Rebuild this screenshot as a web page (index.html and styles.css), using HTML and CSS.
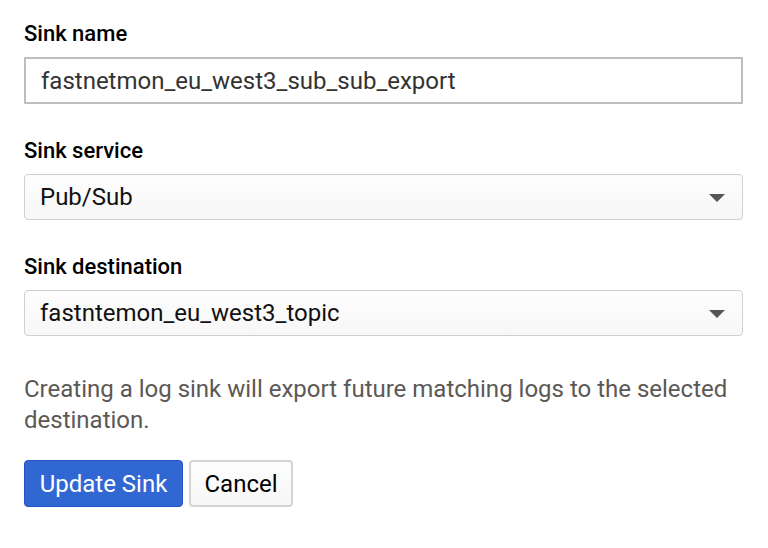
FILE: index.html
```html
<!DOCTYPE html>
<html>
<head>
<meta charset="utf-8">
<link rel="stylesheet" href="styles.css">
</head>
<body>
<form class="sink-form">
  <div class="field">
    <label class="field-label">Sink name</label>
    <div class="text-input">fastnetmon_eu_west3_sub_sub_export</div>
  </div>
  <div class="field">
    <label class="field-label">Sink service</label>
    <div class="select">
      <span class="select-value">Pub/Sub</span>
      <svg class="caret" width="16" height="8" viewBox="0 0 16 8"><path d="M0 0H16L8 8Z" fill="#555"/></svg>
    </div>
  </div>
  <div class="field">
    <label class="field-label">Sink destination</label>
    <div class="select">
      <span class="select-value">fastntemon_eu_west3_topic</span>
      <svg class="caret" width="16" height="8" viewBox="0 0 16 8"><path d="M0 0H16L8 8Z" fill="#555"/></svg>
    </div>
  </div>
  <p class="description">Creating a log sink will export future matching logs to the selected destination.</p>
  <div class="actions">
    <button type="button" class="btn btn-primary">Update Sink</button>
    <button type="button" class="btn btn-secondary">Cancel</button>
  </div>
</form>
</body>
</html>
```

FILE: styles.css
```css
html, body {
  margin: 0;
  padding: 0;
  background: #ffffff;
}

body {
  font-family: Roboto, "Liberation Sans", Arial, sans-serif;
}

.sink-form {
  width: 719px;
  padding: 22px 0 0 24px;
}

.field {
  margin-bottom: 35px;
}

.field-label {
  display: block;
  font-size: 22px;
  line-height: 24px;
  font-weight: 500;
  color: #000;
  margin-bottom: 11px;
}

.text-input {
  box-sizing: border-box;
  height: 47px;
  border: 2px solid #bdbdbd;
  border-radius: 1px;
  padding: 0 15px;
  display: flex;
  align-items: center;
  font-size: 24px;
  color: #333;
  background: #fff;
}

.select {
  box-sizing: border-box;
  height: 46px;
  border: 1.5px solid #d0d0d0;
  border-radius: 4px;
  padding: 0 17px 0 15px;
  display: flex;
  align-items: center;
  justify-content: space-between;
  font-size: 24px;
  color: #111;
  background: linear-gradient(#fdfdfd, #f7f7f7);
}

.caret {
  display: block;
  margin-top: 1px;
}

.description {
  margin: 38px 0 24px 0;
  font-size: 24px;
  line-height: 31px;
  color: #5c5855;
}

.actions {
  display: flex;
  gap: 6px;
}

.btn {
  box-sizing: border-box;
  height: 47px;
  padding: 0;
  font-family: Roboto, "Liberation Sans", Arial, sans-serif;
  font-size: 24px;
  border-radius: 4px;
  cursor: pointer;
}

.btn-primary {
  width: 159px;
  background: #3167d3;
  border: 1.5px solid #1f56c4;
  color: #fff;
}

.btn-secondary {
  width: 104px;
  background: linear-gradient(#fefefe, #f6f6f6);
  border: 2px solid #d4d4d4;
  color: #000;
}
```
